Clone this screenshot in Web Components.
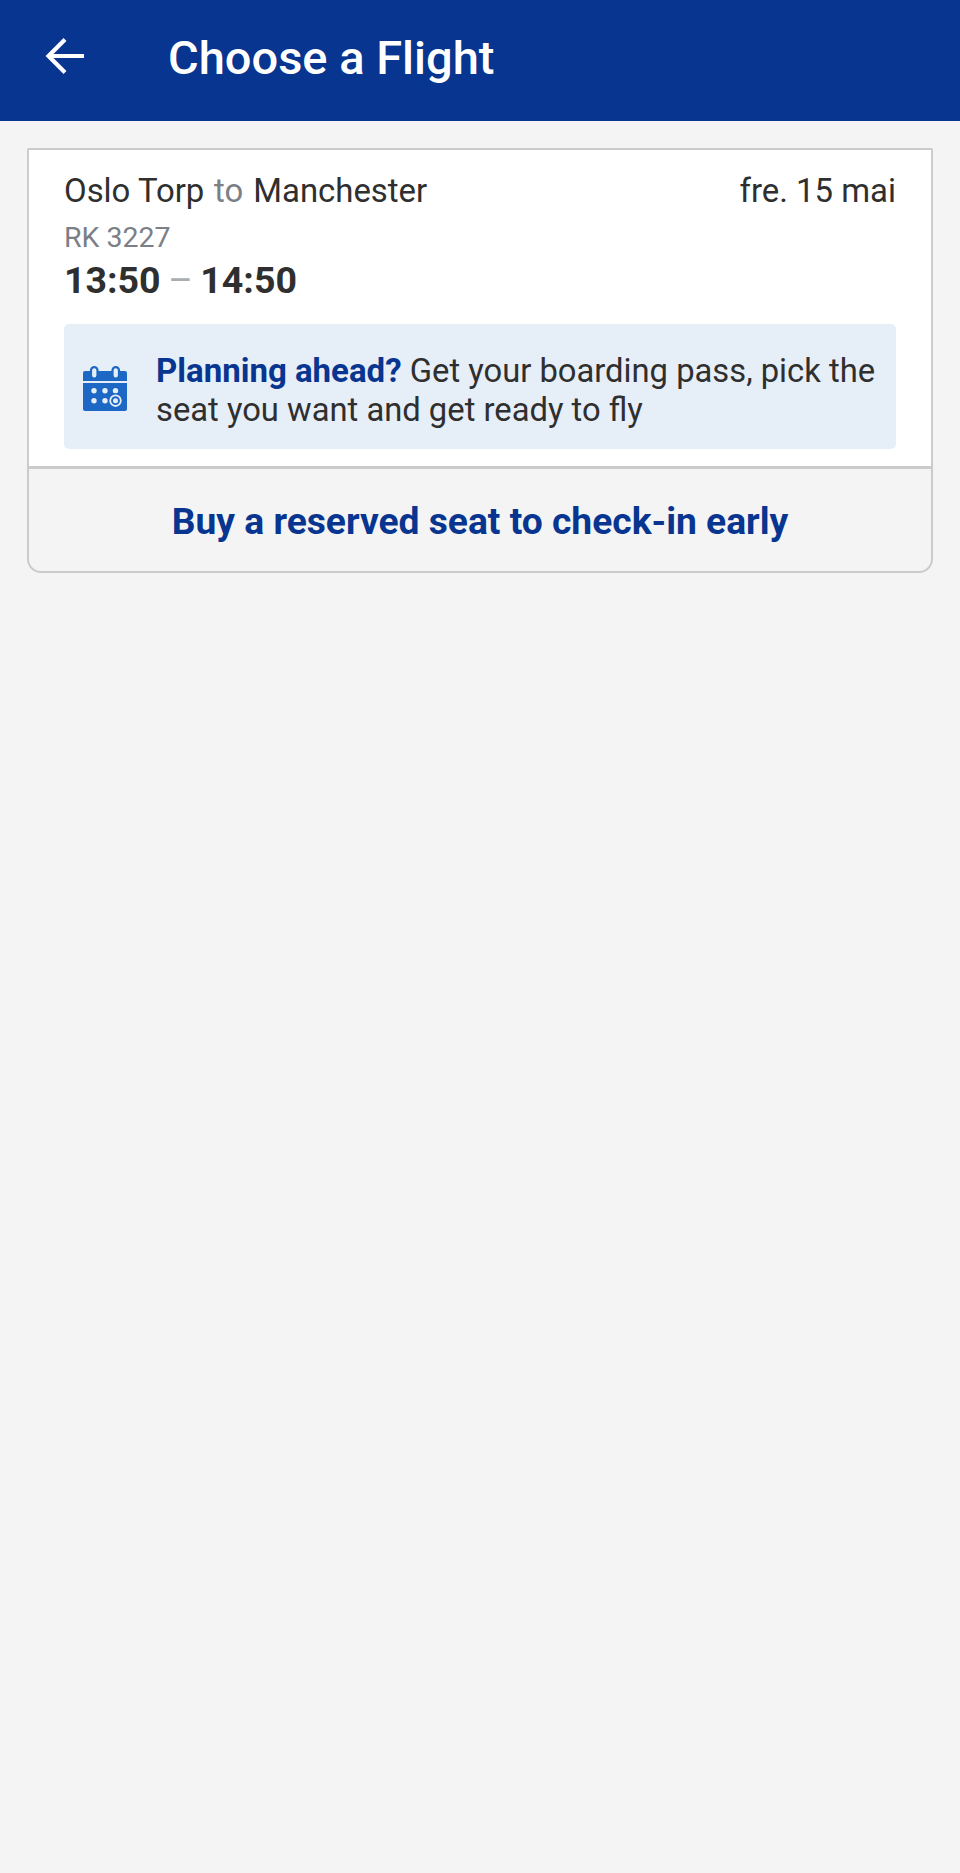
<!DOCTYPE html>
<html>
<head>
<meta charset="utf-8">
<title>Choose a Flight</title>
<style>
  html, body { margin: 0; padding: 0; }
  body { background: #f4f4f4; font-family: Roboto, "Liberation Sans", sans-serif; color: #2f2f2f; min-height: 1873px; }
</style>
</head>
<body>
<app-header>Choose a Flight</app-header>
<flight-card></flight-card>

<script>
class AppHeader extends HTMLElement {
  constructor () {
    super()
    this.shadow = this.attachShadow({ mode: 'open' })
  }
  connectedCallback () {
    this.shadow.innerHTML = `
    <style>
      :host {
        display: flex;
        align-items: center;
        height: 121px;
        background: #073590;
        color: #fff;
        box-sizing: border-box;
        padding: 0 0 6px 45px;
      }
      svg { width: 40px; height: 40px; flex: none; margin-bottom: 3px; }
      .title { margin-left: 83px; font-size: 47px; font-weight: 500; white-space: nowrap; }
    </style>
    <svg viewBox="0 0 40 40" fill="none" stroke="#fff" stroke-width="4.2">
      <path d="M39 20H4M20 3.5L3.5 20 20 36.500"/>
    </svg>
    <div class="title"><slot></slot></div>
    `
  }
}

class InfoBanner extends HTMLElement {
  constructor () {
    super()
    this.shadow = this.attachShadow({ mode: 'open' })
  }
  connectedCallback () {
    this.shadow.innerHTML = `
    <style>
      :host {
        display: flex;
        align-items: center;
        gap: 29px;
        height: 125px;
        box-sizing: border-box;
        padding: 0 8px 0 19px;
        background: #e6eef8;
        border-radius: 5px;
        font-size: 32.750px;
        line-height: 38.500px;
        color: #2f2f2f;
      }
      svg { width: 44px; height: 45px; flex: none; margin-top: 3px; }
      .text { padding-top: 8px; }
    </style>
    <svg viewBox="0 0 44 45">
      <path fill="#1c68c4" d="M2 5h40a2 2 0 0 1 2 2v8H0V7a2 2 0 0 1 2-2zM0 17h44v26a2 2 0 0 1-2 2H2a2 2 0 0 1-2-2z"/>
      <rect x="8" y="1.100" width="6.500" height="11.500" rx="3.200" fill="#e6eef8" stroke="#1c68c4" stroke-width="2.200"/>
      <rect x="29.500" y="1.100" width="6.500" height="11.500" rx="3.200" fill="#e6eef8" stroke="#1c68c4" stroke-width="2.200"/>
      <g fill="#e6eef8">
        <circle cx="11" cy="24.700" r="2.700"/><circle cx="22" cy="24.700" r="2.700"/><circle cx="32.500" cy="24.700" r="2.700"/>
        <circle cx="11" cy="34.700" r="2.700"/><circle cx="22" cy="34.700" r="2.700"/>
      </g>
      <circle cx="32.500" cy="34.700" r="7.400" fill="#1c68c4"/>
      <circle cx="32.500" cy="34.700" r="5.300" fill="#1c68c4" stroke="#e6eef8" stroke-width="1.800"/>
      <circle cx="32.500" cy="34.700" r="2.500" fill="#e6eef8"/>
    </svg>
    <div class="text"><slot></slot></div>
    `
  }
}

class FlightCard extends HTMLElement {
  constructor () {
    super()
    this.shadow = this.attachShadow({ mode: 'open' })
  }
  connectedCallback () {
    this.shadow.innerHTML = `
    <style>
      :host {
        display: block;
        margin: 27px 27px 0 27px;
        border: 2px solid #cbcbcb;
        border-radius: 2px 2px 14px 14px;
        overflow: hidden;
      }
      .top {
        background: #fff;
        padding: 22px 35px 17px 35px;
      }
      .route {
        display: flex;
        justify-content: space-between;
        font-size: 32.900px;
        line-height: 38px;
      }
      .route .to { color: #7b8086; margin: 0 2px 0 1.500px; }
      .num { font-size: 28.500px; line-height: 32px; margin-top: 12px; color: #7b8086; }
      .times { font-size: 37.500px; line-height: 42px; font-weight: 700; margin-top: 5px; word-spacing: -1.800px; }
      .dash { font-weight: 400; color: #a9adb1; }
      info-banner { margin-top: 23px; }
      b { color: #073590; font-weight: 700; font-size: 33px; }
      .action {
        border-top: 3px solid #cbcbcb;
        height: 105px;
        padding-top: 2px;
        display: flex;
        align-items: center;
        justify-content: center;
        box-sizing: border-box;
        font-size: 37.200px;
        font-weight: 700;
        color: #073590;
      }
    </style>
    <div class="top">
      <div class="route">
        <span>Oslo Torp <span class="to">to</span> Manchester</span>
        <span>fre. 15 mai</span>
      </div>
      <div class="num">RK 3227</div>
      <div class="times">13:50 <span class="dash">&ndash;</span> 14:50</div>
      <info-banner><b>Planning ahead?</b> Get your boarding pass, pick the seat you want and get ready to fly</info-banner>
    </div>
    <div class="action">Buy a reserved seat to check-in early</div>
    `
  }
}

customElements.define('app-header', AppHeader)
customElements.define('info-banner', InfoBanner)
customElements.define('flight-card', FlightCard)
</script>
</body>
</html>
